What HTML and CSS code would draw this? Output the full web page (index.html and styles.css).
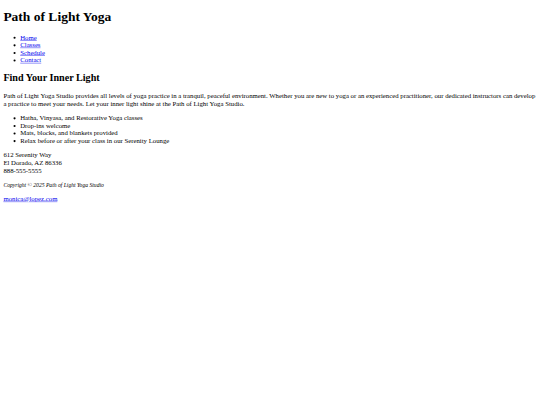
FILE: index.html
```html
<!DOCTYPE html>
<html lang="en">
<head>
<meta charset="utf-8">
<title>Path of Light Yoga</title>
<link rel="stylesheet" href="styles.css">
</head>
<body class="page">
<div class="clip">
<div class="frame">
<header class="site-header">
<h1 class="site-title">Path of Light Yoga</h1>
<nav class="site-nav">
<ul class="nav-list">
<li><a href="#">Home</a></li>
<li><a href="#">Classes</a></li>
<li><a href="#">Schedule</a></li>
<li><a href="#">Contact</a></li>
</ul>
</nav>
</header>
<main class="content">
<h2 class="section-title">Find Your Inner Light</h2>
<p class="intro">Path of Light Yoga Studio provides all levels of yoga practice in a tranquil, peaceful environment. Whether you are new to yoga or an experienced practitioner, our dedicated instructors can develop a practice to meet your needs. Let your inner light shine at the Path of Light Yoga Studio.</p>
<ul class="features">
<li>Hatha, Vinyasa, and Restorative Yoga classes</li>
<li>Drop-ins welcome</li>
<li>Mats, blocks, and blankets provided</li>
<li>Relax before or after your class in our Serenity Lounge</li>
</ul>
<div class="contact">612 Serenity Way<br>El Dorado, AZ 86336<br>888-555-5555</div>
</main>
<footer class="site-footer">
<p class="copyright"><small><i>Copyright &copy; 2025 Path of Light Yoga Studio</i></small></p>
<a class="email" href="mailto:monica@lopez.com">monica@lopez.com</a>
</footer>
</div>
</div>
</body>
</html>
```

FILE: styles.css
```css
.page {
  margin: 0;
  background: #fff;
}

.clip {
  width: 100%;
  height: 100vh;
  overflow: hidden;
}

.frame {
  display: flow-root;
  width: 1264px;
  padding: 0 8px 8px;
  transform: scale(0.421875);
  transform-origin: 0 0;
  font-family: "Liberation Serif", "Times New Roman", serif;
  font-size: 16px;
  color: #000;
}

.site-title {
  font-size: 2em;
  margin: 0.67em 0;
}

.nav-list,
.features {
  margin: 1em 0;
  padding-left: 40px;
}

.section-title {
  font-size: 1.5em;
  margin: 0.83em 0;
}

.intro,
.contact,
.copyright {
  margin: 1em 0;
}

a {
  color: #0000ee;
}
```
